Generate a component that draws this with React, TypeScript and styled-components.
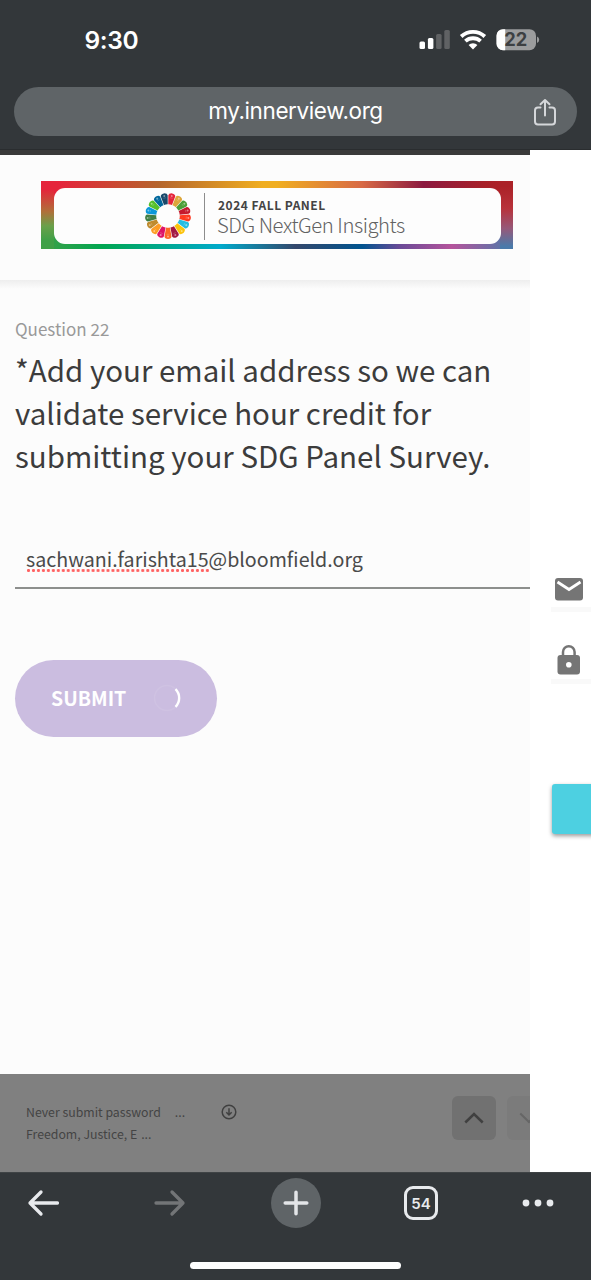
import React from "react";
import styled, { createGlobalStyle } from "styled-components";

const SOURCE = `"Noto Sans CJK SC", "Noto Sans CJK JP", "Noto Sans", sans-serif`;
const SYSTEM = `Inter, "Liberation Sans", sans-serif`;

const GlobalStyle = createGlobalStyle`
  *, *::before, *::after { box-sizing: border-box; }
  html, body { margin: 0; padding: 0; background: #fff; }
  button { font: inherit; border: 0; padding: 0; }
`;

const Screen = styled.div`
  width: 591px;
  height: 1280px;
  display: flex;
  flex-direction: column;
  overflow: hidden;
  background: #fff;
  font-family: ${SYSTEM};
`;

const BrowserTop = styled.header`
  height: 150px;
  flex: none;
  background: #33373a;
  border-bottom: 1px solid #2a2d2f;
`;

const StatusBar = styled.div`
  height: 87px;
  padding: 0 51px 7px 84.5px;
  display: flex;
  align-items: center;
`;

const Clock = styled.span`
  flex: 1;
  color: #fff;
  font-size: 24.5px;
  line-height: 30px;
  font-weight: 600;
  letter-spacing: -0.35px;
`;

const StatusIcons = styled.svg`
  display: block;
  width: 122px;
  height: 24px;
  flex: none;
`;

const AddressBar = styled.div`
  height: 49px;
  margin: 0 14px;
  padding: 0 20px 0 44px;
  border-radius: 25px;
  background: #5f6467;
  display: flex;
  align-items: center;
`;

const Url = styled.span`
  flex: 1;
  padding-bottom: 2px;
  text-align: center;
  color: #fff;
  font-size: 22.5px;
  line-height: 28px;
  letter-spacing: -0.4px;
`;

const Page = styled.main`
  flex: 1;
  min-height: 0;
  display: flex;
`;

const Survey = styled.section`
  width: 530px;
  flex: none;
  display: flex;
  flex-direction: column;
  overflow: hidden;
  background: #fcfcfc;
  border-top: 5px solid #3a3a3a;
  font-family: ${SOURCE};
`;

const SurveyHeader = styled.div`
  height: 125px;
  flex: none;
  padding: 26px 0 0 41px;
`;

const HeaderShadow = styled.div`
  height: 9px;
  flex: none;
  background: linear-gradient(#eeeeee, #fcfcfc);
`;

const Banner = styled.div`
  width: 472px;
  height: 68px;
  padding: 7px 12px 5px 13px;
  background:
    linear-gradient(90deg, #e5243b 0, #e5243b 4%, #b5652c 25%, #f0ae20 47%, #f0ae20 50%, #d86a45 68%, #8c1a40 81%, #a82028 94%, #b02226 100%) top / 100% 50% no-repeat,
    linear-gradient(90deg, #3fa047 0, #00a651 13%, #00aacb 38%, #33476b 54%, #00548f 68%, #6a4a97 76%, #b5549c 87%, #4a7aaa 100%) bottom / 100% 50% no-repeat;
  position: relative;
  &::before, &::after {
    content: "";
    position: absolute;
    top: 0;
    bottom: 0;
    width: 13px;
  }
  &::before { left: 0; background: linear-gradient(#e5243b 12%, #b0703a 45%, #6aa04a 66%, #3fa047 88%); }
  &::after { right: 0; background: linear-gradient(#ab2228 8%, #b8323a 40%, #95597a 70%, #4a7aaa 96%); }
`;

const BannerInner = styled.div`
  height: 56px;
  border-radius: 11px;
  background: #fdfdfd;
  display: flex;
  align-items: center;
  padding-left: 90px;
  position: relative;
  z-index: 1;
`;

const Divider = styled.i`
  width: 1px;
  height: 47px;
  margin: 1px 12px 0 12px;
  background: #8d8d8d;
`;

const BannerText = styled.div`
  display: flex;
  flex-direction: column;
  white-space: nowrap;
`;

const PanelName = styled.strong`
  font-size: 12px;
  line-height: 15px;
  font-weight: 700;
  letter-spacing: 0.5px;
  color: #444;
  padding-left: 1px;
`;

const PanelTitle = styled.span`
  font-size: 20.3px;
  line-height: 24px;
  font-weight: 300;
  letter-spacing: -0.45px;
  color: #626262;
`;

const SurveyBody = styled.div`
  flex: 1;
  min-height: 0;
  padding: 28px 0 0 15px;
`;

const QuestionNumber = styled.div`
  font-size: 17px;
  line-height: 24px;
  color: #999;
`;

const Question = styled.h1`
  margin: 7px 0 0;
  font-size: 29.5px;
  line-height: 43px;
  font-weight: 400;
  color: #3c3c3c;
  white-space: nowrap;
`;

const EmailField = styled.div`
  height: 63px;
  margin-top: 49px;
  padding: 19px 0 0 11px;
  border-bottom: 2px solid #8d8f8d;
  font-size: 19.65px;
  line-height: 28px;
  color: #4a4a4a;
  white-space: nowrap;
`;

const Misspelled = styled.span`
  display: inline-block;
  height: 28px;
  background: radial-gradient(circle at 2.5px 1.5px, #ff6262 1.2px, transparent 1.9px) 0 24px / 4.97px 3px repeat-x;
`;

const Submit = styled.button`
  width: 202px;
  height: 77px;
  margin-top: 71px;
  padding: 0 35px 1px 36px;
  border-radius: 39px;
  background: #cbbde0;
  color: #fff;
  display: flex;
  align-items: center;
  justify-content: space-between;
  font-size: 19.5px;
  font-weight: 700;
  line-height: 28px;
`;

const SurveyFooter = styled.footer`
  height: 98px;
  flex: none;
  padding: 22px 0 0 26px;
  background: #808080;
  display: flex;
  color: #444;
  overflow: hidden;
`;

const FooterText = styled.div`
  width: 195px;
  flex: none;
  padding-top: 5px;
  font-size: 12.3px;
  line-height: 22px;
  white-space: nowrap;
`;

const Ellipsis = styled.span<{ $gap: number }>`
  margin-left: ${(p) => p.$gap}px;
`;

const FooterIcon = styled.div`
  width: 231px;
  padding-top: 8px;
  flex: none;
  svg { display: block; }
`;

const StepButton = styled.button<{ $disabled?: boolean }>`
  width: 44px;
  height: 44px;
  flex: none;
  margin-right: 11px;
  border-radius: 6px;
  background: ${(p) => (p.$disabled ? "#7b7b7b" : "#717171")};
  color: ${(p) => (p.$disabled ? "#666" : "#404040")};
  display: flex;
  align-items: center;
  justify-content: center;
`;

const SidePanel = styled.aside`
  flex: 1;
  min-width: 0;
  padding: 424px 0 0 21px;
  display: flex;
  flex-direction: column;
  overflow: hidden;
  background: #fff;
`;

const SideItem = styled.div<{ $height: number }>`
  height: ${(p) => p.$height}px;
  flex: none;
  border-bottom: 5px solid #f9f9f9;
  color: #757575;
  display: flex;
  align-items: flex-end;
`;

const SideAction = styled.div`
  width: 60px;
  height: 50px;
  flex: none;
  margin: 100px 0 0 1px;
  border-radius: 3px;
  background: #4dd0e1;
  box-shadow: 0 2px 4px rgba(0, 0, 0, 0.4);
`;

const BrowserBottom = styled.nav`
  height: 108px;
  flex: none;
  background: #33373a;
  border-top: 1px solid #3f4345;
  display: flex;
  flex-direction: column;
  align-items: center;
`;

const Tools = styled.div`
  width: 100%;
  height: 60px;
  padding: 0 34px 0 26px;
  display: grid;
  grid-template-columns: 126px 118.5px 133px 117px 36px;
  align-items: center;
`;

const NewTab = styled.div`
  width: 50px;
  height: 50px;
  border-radius: 50%;
  background: #5f6467;
  display: flex;
  align-items: center;
  justify-content: center;
`;

const TabCount = styled.div`
  width: 34px;
  height: 34px;
  margin-left: 0.5px;
  border: 3px solid #e8eaed;
  border-radius: 9px;
  color: #e8eaed;
  font-size: 15px;
  font-weight: 600;
  line-height: 29px;
  text-align: center;
`;

const HomeIndicator = styled.div`
  width: 211px;
  height: 7px;
  margin-top: 29px;
  border-radius: 4px;
  background: #fff;
`;

const goalColors = [
  "#E5243B", "#DDA63A", "#4C9F38", "#C5192D", "#FF3A21", "#26BDE2", "#FCC30B", "#A21942", "#FD6925",
  "#DD1367", "#FD9D24", "#BF8B2E", "#3F7E44", "#0A97D9", "#56C02B", "#00689D", "#19486A",
];

const GoalWheel = () => (
  <svg width="48" height="48" viewBox="-24 -24 48 48">
    {goalColors.map((color, i) => (
      <g key={color} transform={`rotate(${(i + 0.5) * (360 / 17)})`}>
        <path d="M-1.900 -11.600 L-3.500 -20.500 Q-3.400 -22.600 0 -23 Q3.400 -22.600 3.500 -20.500 L1.900 -11.600 Q0 -12 -1.900 -11.600Z" fill={color} />
        <circle cy="-20.4" r="1" fill="#fff" opacity="0.45" />
        <path d="M-1.300 -18.300 H1.300" stroke="#fff" strokeWidth="0.6" opacity="0.3" fill="none" />
      </g>
    ))}
  </svg>
);

const SignalWifiBattery = () => (
  <StatusIcons viewBox="0 0 122 24">
    <rect x="1.500" y="13.500" width="5.500" height="7.500" rx="1.500" fill="#fff" />
    <rect x="9.900" y="10" width="5.500" height="11" rx="1.500" fill="#fff" />
    <rect x="18.100" y="6" width="5.500" height="15" rx="1.500" fill="#606264" />
    <rect x="26.300" y="2" width="5.500" height="19" rx="1.500" fill="#606264" />
    <g fill="none" stroke="#fff" strokeWidth="3.800">
      <path d="M43.200 8.500 A17.300 17.300 0 0 1 66.800 8.500" />
      <path d="M47.400 13.200 A11.200 11.200 0 0 1 62.600 13.200" />
    </g>
    <path d="M55 21.400 L50.600 17.100 A6 6 0 0 1 59.400 17.100Z" fill="#fff" />
    <rect x="78.500" y="1.200" width="39.500" height="21" rx="6.500" fill="#9b9c9d" />
    <path d="M87.200 1.200 H85 A6.500 6.500 0 0 0 78.500 7.700 V15.700 A6.500 6.500 0 0 0 85 22.200 H87.200Z" fill="#fff" />
    <path d="M119 8.500 Q121.200 9.500 121.200 11.800 Q121.200 14 119 15Z" fill="#9b9c9d" />
    <text x="97.800" y="18.400" fill="#3d4042" fontFamily="Inter, sans-serif" fontSize="18.300" fontWeight="700" textAnchor="middle">22</text>
  </StatusIcons>
);

export default function App() {
  return (
    <>
      <GlobalStyle />
      <Screen>
        <BrowserTop>
          <StatusBar>
            <Clock>9:30</Clock>
            <SignalWifiBattery />
          </StatusBar>
          <AddressBar>
            <Url>my.innerview.org</Url>
            <svg width="24" height="30" viewBox="0 0 24 30" fill="none" stroke="#d5d7da" strokeWidth="2" strokeLinecap="round" strokeLinejoin="round">
              <path d="M7.500 10.500 H5 Q2 10.500 2 13.500 V24.500 Q2 27.500 5 27.500 H19 Q22 27.500 22 24.500 V13.500 Q22 10.500 19 10.500 H16.500" />
              <path d="M12 18.500 V3.500 M7.500 7.300 L12 3 L16.500 7.300" />
            </svg>
          </AddressBar>
        </BrowserTop>

        <Page>
          <Survey>
            <SurveyHeader>
              <Banner>
                <BannerInner>
                  <GoalWheel />
                  <Divider />
                  <BannerText>
                    <PanelName>2024 FALL PANEL</PanelName>
                    <PanelTitle>SDG NextGen Insights</PanelTitle>
                  </BannerText>
                </BannerInner>
              </Banner>
            </SurveyHeader>
            <HeaderShadow />
            <SurveyBody>
              <QuestionNumber>Question 22</QuestionNumber>
              <Question>
                *Add your email address so we can
                <br />
                validate service hour credit for
                <br />
                submitting your SDG Panel Survey.
              </Question>
              <EmailField>
                <Misspelled>sachwani.farishta15</Misspelled>@bloomfield.org
              </EmailField>
              <Submit>
                SUBMIT
                <svg width="28" height="28" viewBox="0 0 28 28" fill="none">
                  <circle cx="13" cy="14" r="12.500" stroke="#cfc2e2" strokeWidth="1.500" />
                  <path d="M21.500 5.200 A12.400 12.400 0 0 1 21.500 22.800" stroke="#fff" strokeWidth="2.400" />
                </svg>
              </Submit>
            </SurveyBody>
            <SurveyFooter>
              <FooterText>
                <div>
                  Never submit password<Ellipsis $gap={14}>...</Ellipsis>
                </div>
                <div>
                  Freedom, Justice, E<Ellipsis $gap={4}>...</Ellipsis>
                </div>
              </FooterText>
              <FooterIcon>
                <svg width="16" height="16" viewBox="0 0 16 16" fill="none" stroke="#404040" strokeWidth="1.500">
                  <circle cx="8" cy="8" r="6.800" />
                  <path d="M8 4.300 V11 M5.300 8.300 L8 11 L10.700 8.300" />
                </svg>
              </FooterIcon>
              <StepButton>
                <svg width="20" height="12" viewBox="0 0 20 12" fill="none" stroke="currentColor" strokeWidth="2.500">
                  <path d="M1.300 10.500 L10 2 L18.700 10.500" />
                </svg>
              </StepButton>
              <StepButton $disabled>
                <svg width="20" height="12" viewBox="0 0 20 12" fill="none" stroke="currentColor" strokeWidth="2">
                  <path d="M1.300 1.500 L10 10 L18.700 1.500" />
                </svg>
              </StepButton>
            </SurveyFooter>
          </Survey>

          <SidePanel>
            <SideItem $height={38}>
              <svg width="36" height="38" viewBox="0 0 36 38">
                <rect x="4" y="9" width="28" height="22.500" rx="3" fill="currentColor" />
                <path d="M6.500 13 L18 20.500 L29.500 13" fill="none" stroke="#fff" strokeWidth="2.800" />
              </svg>
            </SideItem>
            <SideItem $height={72}>
              <svg width="36" height="38" viewBox="0 0 36 38">
                <rect x="6.500" y="14" width="22.500" height="19.500" rx="3" fill="currentColor" />
                <path d="M12 15 V11 A5.800 5.800 0 0 1 23.600 11 V15" fill="none" stroke="currentColor" strokeWidth="2.500" />
                <circle cx="17.800" cy="23.700" r="2.800" fill="#fff" />
              </svg>
            </SideItem>
            <SideAction />
          </SidePanel>
        </Page>

        <BrowserBottom>
          <Tools>
            <svg width="34" height="28" viewBox="0 0 34 28" fill="none" stroke="#e8eaed" strokeWidth="3.300" strokeLinecap="round" strokeLinejoin="round">
              <path d="M31.500 14 H4 M15 3 L4 14 L15 25" />
            </svg>
            <svg width="34" height="28" viewBox="0 0 34 28" fill="none" stroke="#737577" strokeWidth="3.300" strokeLinecap="round" strokeLinejoin="round">
              <path d="M4 14 H31 M20 3 L31 14 L20 25" />
            </svg>
            <NewTab>
              <svg width="26" height="26" viewBox="0 0 26 26" fill="none" stroke="#e3e5e8" strokeWidth="3.500" strokeLinecap="round">
                <path d="M13 2.200 V23.800 M2.200 13 H23.800" />
              </svg>
            </NewTab>
            <TabCount>54</TabCount>
            <svg width="34" height="10" viewBox="0 0 34 10" fill="#e8eaed">
              <circle cx="5" cy="5" r="3.400" />
              <circle cx="17" cy="5" r="3.400" />
              <circle cx="29" cy="5" r="3.400" />
            </svg>
          </Tools>
          <HomeIndicator />
        </BrowserBottom>
      </Screen>
    </>
  );
}
